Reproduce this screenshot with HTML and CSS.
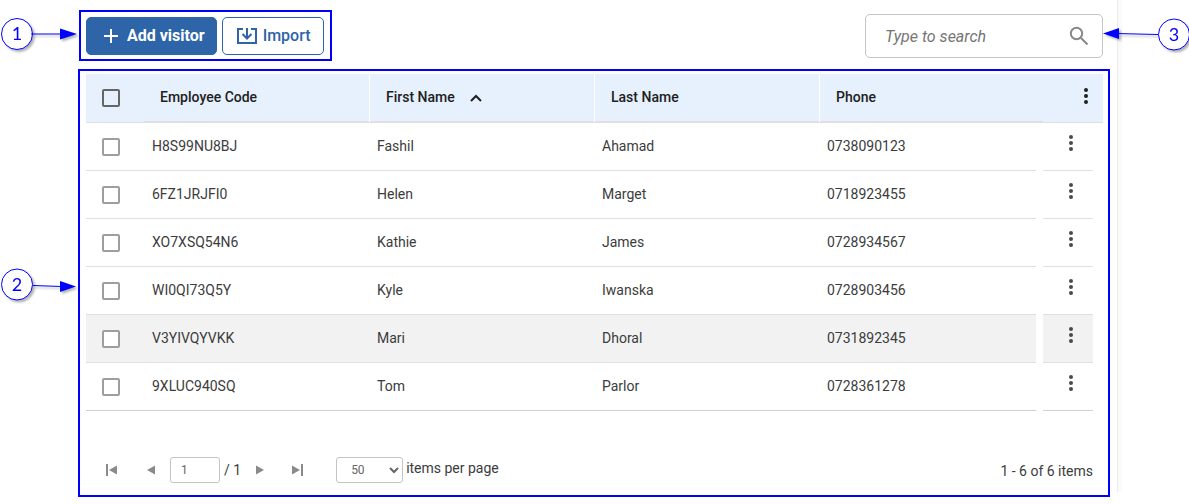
FILE: index.html
```html
<!DOCTYPE html>
<html lang="en">
<head>
    <meta charset="UTF-8">
    <meta name="viewport" content="width=device-width, initial-scale=1.0">
    <title>Visitors</title>
    <link rel="stylesheet" href="styles.css">
</head>
<body>

    <!-- Shared icons -->
    <svg class="icon-defs" width="0" height="0" aria-hidden="true">
        <symbol id="dots" viewBox="0 0 24 24">
            <circle cx="12" cy="6" r="2"/><circle cx="12" cy="12" r="2"/><circle cx="12" cy="18" r="2"/>
        </symbol>
    </svg>

    <main class="page">

        <!-- Toolbar -->
        <div class="toolbar">
            <div class="outline outline-actions">
                <svg class="callout callout-left" width="80" height="40" viewBox="0 0 80 40">
                    <circle class="callout-ring" cx="16" cy="20" r="15.5"/>
                    <text class="callout-number" x="16" y="26">1</text>
                    <path class="callout-line" d="M30 20H62"/>
                    <path class="callout-head" d="M76 20L59 14.5V25.5Z"/>
                </svg>
                <button type="button" class="btn btn-primary">
                    <svg width="16" height="16" viewBox="0 0 16 16"><path d="M8 1v14M1 8h14" fill="none" stroke="currentColor" stroke-width="2"/></svg>
                    Add visitor
                </button>
                <button type="button" class="btn btn-secondary">
                    <svg width="20" height="18" viewBox="0 0 20 18"><path d="M6 2H1V16H19V2H14M10 1V11M5.5 7L10 11.5L14.5 7" fill="none" stroke="currentColor" stroke-width="2"/></svg>
                    Import
                </button>
            </div>

            <div class="search">
                <input type="search" class="search-input" placeholder="Type to search" aria-label="Type to search">
                <svg class="search-icon" width="20" height="20" viewBox="0 0 20 20"><circle cx="7.5" cy="7.5" r="5.7"/><path d="M12 12L18.5 18.5"/></svg>
                <svg class="callout callout-right" width="88" height="40" viewBox="0 0 88 40">
                    <circle class="callout-ring" cx="72" cy="19.5" r="15.5"/>
                    <text class="callout-number" x="72" y="26">3</text>
                    <path class="callout-line" d="M56 19.5L14 18.5"/>
                    <path class="callout-head" d="M1 18.5L17 13V24Z"/>
                </svg>
            </div>
        </div>

        <!-- Visitor List -->
        <section class="outline outline-grid">
            <svg class="callout callout-left" width="80" height="40" viewBox="0 0 80 40">
                <circle class="callout-ring" cx="17" cy="18.5" r="15.5"/>
                <text class="callout-number" x="17" y="25">2</text>
                <path class="callout-line" d="M33 19.5L62 20.5"/>
                <path class="callout-head" d="M76 20.5L60 15V26Z"/>
            </svg>

            <table class="grid">
                <colgroup>
                    <col class="col-check"><col class="col-data"><col class="col-data"><col class="col-data">
                    <col><col class="col-gap"><col class="col-menu"><col class="col-end">
                </colgroup>
                <thead>
                    <tr>
                        <th class="cell-check"><input type="checkbox" class="check" aria-label="Select all"></th>
                        <th class="head">Employee Code</th>
                        <th class="head split">First Name <svg class="sort" width="12" height="8" viewBox="0 0 12 8"><path d="M1 7L6 2L11 7" fill="none" stroke="currentColor" stroke-width="2"/></svg></th>
                        <th class="head split">Last Name</th>
                        <th class="head split" colspan="2">Phone</th>
                        <th class="head-menu" colspan="2"><button type="button" class="menu" aria-label="Columns"><svg width="24" height="24"><use href="#dots"/></svg></button></th>
                    </tr>
                </thead>
                <tbody>
                    <tr>
                        <td class="cell-check"><input type="checkbox" class="check" aria-label="Select Fashil"></td>
                        <td>H8S99NU8BJ</td><td>Fashil</td><td>Ahamad</td><td>0738090123</td><td class="none"></td>
                        <td class="cell-menu"><button type="button" class="menu" aria-label="Actions"><svg width="24" height="24"><use href="#dots"/></svg></button></td><td class="none"></td>
                    </tr>
                    <tr>
                        <td class="cell-check"><input type="checkbox" class="check" aria-label="Select Helen"></td>
                        <td>6FZ1JRJFI0</td><td>Helen</td><td>Marget</td><td>0718923455</td><td class="none"></td>
                        <td class="cell-menu"><button type="button" class="menu" aria-label="Actions"><svg width="24" height="24"><use href="#dots"/></svg></button></td><td class="none"></td>
                    </tr>
                    <tr>
                        <td class="cell-check"><input type="checkbox" class="check" aria-label="Select Kathie"></td>
                        <td>XO7XSQ54N6</td><td>Kathie</td><td>James</td><td>0728934567</td><td class="none"></td>
                        <td class="cell-menu"><button type="button" class="menu" aria-label="Actions"><svg width="24" height="24"><use href="#dots"/></svg></button></td><td class="none"></td>
                    </tr>
                    <tr>
                        <td class="cell-check"><input type="checkbox" class="check" aria-label="Select Kyle"></td>
                        <td>WI0QI73Q5Y</td><td>Kyle</td><td>Iwanska</td><td>0728903456</td><td class="none"></td>
                        <td class="cell-menu"><button type="button" class="menu" aria-label="Actions"><svg width="24" height="24"><use href="#dots"/></svg></button></td><td class="none"></td>
                    </tr>
                    <tr class="active">
                        <td class="cell-check"><input type="checkbox" class="check" aria-label="Select Mari"></td>
                        <td>V3YIVQYVKK</td><td>Mari</td><td>Dhoral</td><td>0731892345</td><td class="none"></td>
                        <td class="cell-menu"><button type="button" class="menu" aria-label="Actions"><svg width="24" height="24"><use href="#dots"/></svg></button></td><td class="none"></td>
                    </tr>
                    <tr>
                        <td class="cell-check"><input type="checkbox" class="check" aria-label="Select Tom"></td>
                        <td>9XLUC940SQ</td><td>Tom</td><td>Parlor</td><td>0728361278</td><td class="none"></td>
                        <td class="cell-menu"><button type="button" class="menu" aria-label="Actions"><svg width="24" height="24"><use href="#dots"/></svg></button></td><td class="none"></td>
                    </tr>
                </tbody>
            </table>

            <!-- Pagination -->
            <div class="pager">
                <div class="pager-nav">
                    <button type="button" class="pager-btn" aria-label="First page"><svg width="12" height="12" viewBox="0 0 12 12"><path d="M0 0H2V12H0ZM11 1.5V10.5L3 6Z"/></svg></button>
                    <button type="button" class="pager-btn" aria-label="Previous page"><svg width="12" height="12" viewBox="0 0 12 12"><path d="M10 1.5V10.5L2 6Z"/></svg></button>
                    <input type="text" class="pager-input" value="1" aria-label="Page">
                    <span class="pager-total">/ 1</span>
                    <button type="button" class="pager-btn" aria-label="Next page"><svg width="12" height="12" viewBox="0 0 12 12"><path d="M2 1.5V10.5L10 6Z"/></svg></button>
                    <button type="button" class="pager-btn" aria-label="Last page"><svg width="12" height="12" viewBox="0 0 12 12"><path d="M10 0H12V12H10ZM1 1.5V10.5L9 6Z"/></svg></button>
                </div>
                <div class="pager-size">
                    <select class="pager-select" id="page_size" name="page_size">
                        <option>50</option>
                        <option>100</option>
                    </select>
                    <label for="page_size">items per page</label>
                </div>
                <div class="pager-info">1 - 6 of 6 items</div>
            </div>
        </section>

    </main>

</body>
</html>
```

FILE: styles.css
```css
/* Basic Styles */
* {
    box-sizing: border-box;
}
body {
    margin: 0;
    background-color: #fff;
    color: #3c3c3c;
    font-family: Roboto, "Liberation Sans", sans-serif;
    font-size: 14px;
    line-height: 20px;
}
button, input, select {
    font-family: inherit;
}
button {
    cursor: pointer;
}
.icon-defs {
    position: absolute;
}
.page {
    position: relative;
    padding: 10px 79px 7px 78px;
    overflow: hidden;
}
/* Edge of the scroll area */
.page::after {
    content: "";
    position: absolute;
    top: 0;
    right: 67px;
    bottom: 12px;
    width: 4px;
    background-color: #fafafa;
    border-left: 1px solid #ececec;
    z-index: -1;
}

/* Callouts */
.outline {
    position: relative;
    border: 2px solid #0000ff;
}
.callout {
    position: absolute;
    overflow: visible;
    pointer-events: none;
    filter: drop-shadow(2px 2px 1px rgba(0, 0, 0, 0.3));
}
.callout-left {
    top: 50%;
    right: 100%;
    margin-top: -22px;
}
.outline-grid .callout-left {
    margin-top: -17px;
}
.callout-right {
    top: 0;
    left: 100%;
}
.callout-ring {
    fill: #fff;
    stroke: #0000ff;
    stroke-width: 1;
}
.callout-line {
    stroke: #0000ff;
    stroke-width: 1;
}
.callout-head {
    fill: #0000ff;
}
.callout-number {
    fill: #0000ff;
    font-family: Lato, sans-serif;
    font-size: 18px;
    text-anchor: middle;
}

/* Toolbar */
.toolbar {
    display: flex;
    justify-content: space-between;
    align-items: flex-start;
    padding: 0 7px 0 1px;
    margin-bottom: 8px;
}
.outline-actions {
    display: flex;
    gap: 5px;
    padding: 5px 6px 4px 5px;
}
.btn {
    display: flex;
    align-items: center;
    height: 38px;
    border: 1px solid #2d65a8;
    border-radius: 5px;
    font-size: 16px;
    line-height: 20px;
}
.btn-primary {
    gap: 8px;
    padding: 0 11px 0 16px;
    background-color: #2d65a8;
    color: #fff;
    font-weight: 700;
}
.btn-secondary {
    gap: 6px;
    padding: 0 12px 0 14px;
    background-color: #fff;
    color: #2d65a8;
    font-weight: 500;
}
.search {
    position: relative;
    display: flex;
    align-items: center;
    width: 20%;
    min-width: 238px;
    height: 44px;
    margin-top: 4px;
    padding: 0 13px 0 19px;
    border: 1px solid #c4c4c4;
    border-radius: 5px;
}
.search-input {
    flex: 1;
    min-width: 0;
    padding: 0;
    border: none;
    outline: none;
    background: none;
    font-size: 16px;
}
.search-input::placeholder {
    color: #757575;
    font-style: italic;
}
.search-icon {
    fill: none;
    stroke: #888;
    stroke-width: 2;
}

/* Table */
.outline-grid {
    padding: 3px 5px 12px 6px;
}
.grid {
    width: 100%;
    table-layout: fixed;
    border-collapse: separate;
    border-spacing: 0;
}
.col-check {
    width: 58px;
}
.col-data {
    width: 225px;
}
.col-gap {
    width: 7px;
}
.col-menu {
    width: 50px;
}
.col-end {
    width: 10px;
}
.grid th {
    height: 49px;
    padding: 0;
    background-color: #e6f1fd;
    border-bottom: 1px solid #e0e0e0;
    color: #212121;
    font-weight: 500;
    text-align: left;
}
.grid th.head {
    padding: 0 0 2px 16px;
    border-bottom-width: 2px;
}
.grid th.split {
    border-left: 1px solid #fff;
}
.grid td {
    height: 48px;
    padding: 0 8px 2px;
    border-bottom: 1px solid #e0e0e0;
}
.grid tbody tr:last-child td {
    border-bottom-color: #d0d0d0;
}
.grid .active td {
    background-color: #f2f2f2;
}
.grid td.none {
    padding: 0;
    background: none;
    border: none;
}
.grid .cell-check {
    padding: 0 0 0 16px;
}
.check {
    appearance: none;
    display: block;
    width: 18px;
    height: 18px;
    margin: 0;
    border: 2px solid #9e9e9e;
    border-radius: 2px;
    background-color: #fff;
}
th .check {
    border-color: #666;
    background: none;
}
.sort {
    margin-left: 12px;
}
.menu {
    display: inline-block;
    width: 24px;
    height: 24px;
    padding: 0;
    border: none;
    background: none;
    color: #4a4a4a;
}
.menu svg {
    display: block;
    fill: currentColor;
}
.grid .head-menu {
    padding: 0 5px 4px 0;
    text-align: right;
}
.head-menu .menu {
    color: #212121;
    vertical-align: middle;
}
.grid .cell-menu {
    padding: 8px 0 0 16px;
    vertical-align: top;
}

/* Pagination */
.pager {
    display: flex;
    align-items: center;
    margin-top: 46px;
    padding: 0 10px 0 16px;
}
.pager-nav {
    display: flex;
    align-items: center;
}
.pager-btn {
    display: flex;
    justify-content: center;
    width: 37px;
    padding: 0;
    border: none;
    background: none;
}
.pager-btn:first-child {
    width: 20px;
    margin-right: 10px;
}
.pager-btn svg {
    fill: #8a8a8a;
}
.pager-input, .pager-select {
    height: 26px;
    border: 1px solid #c4c4c4;
    border-radius: 3px;
    background-color: #fff;
    color: #666;
    font-size: 12px;
}
.pager-input {
    width: 50px;
    padding: 0 10px;
    margin: 0 4px 0 1px;
}
.pager-size {
    display: flex;
    align-items: center;
    gap: 3px;
    margin-left: 21px;
}
.pager-size label {
    padding-bottom: 4px;
}
.pager-select {
    width: 67px;
    padding: 0 0 0 10px;
}
.pager-info {
    margin-left: auto;
    padding-top: 2px;
}
```
